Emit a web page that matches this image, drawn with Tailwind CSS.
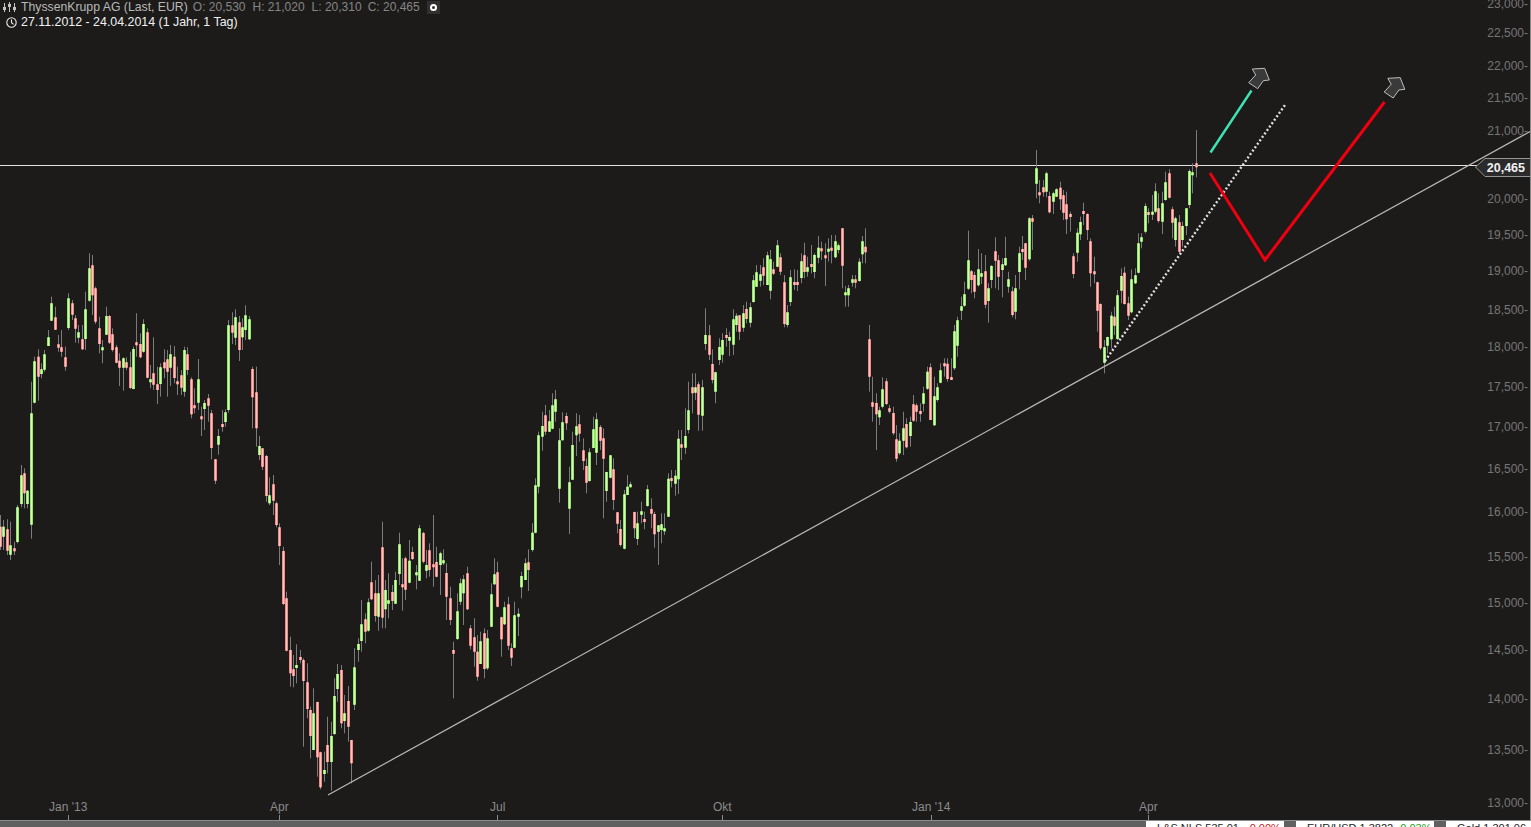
<!doctype html>
<html>
<head>
<meta charset="utf-8">
<script src="https://cdn.jsdelivr.net/npm/@tailwindcss/browser@4"></script>
</head>
<body class="m-0 overflow-hidden bg-[#1c1b1a]">
<div class="flex h-[827px] w-[1531px] flex-col overflow-hidden font-['Liberation_Sans',Arial,sans-serif]">
  <main class="relative flex-1 overflow-hidden bg-[#1c1b1a]">
    <svg id="chart" class="absolute inset-0" width="1531" height="820" viewBox="0 0 1531 820">
      <line x1="0" y1="165.5" x2="1477" y2="165.5" stroke="#e2e2e2" stroke-width="1"/>
      <g id="wicks"></g>
      <path id="bodyG" fill="none" stroke="#94e668" stroke-width="3"/>
      <path id="bodyGi" fill="none" stroke="#d6f8bc" stroke-width="1"/>
      <path id="bodyR" fill="none" stroke="#f08a8a" stroke-width="3"/>
      <path id="bodyRi" fill="none" stroke="#ffc6be" stroke-width="1"/>
      <line x1="328" y1="795" x2="1531" y2="131" stroke="#b9b9b6" stroke-width="1.2"/>
      <line x1="1105" y1="361" x2="1285" y2="105" stroke="#dedede" stroke-width="2.4" stroke-dasharray="2 2.2"/>
      <line x1="1210.5" y1="152.5" x2="1251.5" y2="90.5" stroke="#3fe3b4" stroke-width="2.4"/>
      <polyline points="1210,173 1265,260 1384.5,102" fill="none" stroke="#ee0010" stroke-width="3"/>
      <polygon points="1248.7,82.7 1257.7,88.7 1263.3,80.7 1269.3,80 1264.7,68.3 1252.3,69 1255.7,75" fill="#3a3a3a" stroke="#bdbdbd" stroke-width="1"/>
      <polygon points="1384.2,92 1393.2,98 1398.8,90 1404.8,89.3 1400.2,77.6 1387.8,78.3 1391.2,84.3" fill="#3a3a3a" stroke="#bdbdbd" stroke-width="1"/>
      <polygon points="1475.5,167 1485,158.5 1531,158.5 1531,176.5 1485,176.5" fill="#2b2b2b" stroke="#969696" stroke-width="1"/>
      <line x1="68.5" y1="815" x2="68.5" y2="820" stroke="#8a8a8a"/>
      <line x1="279.5" y1="815" x2="279.5" y2="820" stroke="#8a8a8a"/>
      <line x1="497.5" y1="815" x2="497.5" y2="820" stroke="#8a8a8a"/>
      <line x1="722.5" y1="815" x2="722.5" y2="820" stroke="#8a8a8a"/>
      <line x1="931.5" y1="815" x2="931.5" y2="820" stroke="#8a8a8a"/>
      <line x1="1148.5" y1="815" x2="1148.5" y2="820" stroke="#8a8a8a"/>
    </svg>

    <!-- legend -->
    <div class="absolute left-[3px] top-0 flex flex-col">
      <div class="flex h-[14px] items-center text-[12px] leading-none text-[#868686]">
        <svg class="mr-[5px]" width="13" height="12" viewBox="0 0 13 12" fill="none" stroke="#c4c4c4" stroke-width="1">
          <path d="M1.5 2V11M6.5 1V11M11.5 2V11"/>
          <rect x="0" y="6" width="3" height="3" fill="#c4c4c4" stroke="none"/>
          <rect x="5" y="3" width="3" height="3" fill="#c4c4c4" stroke="none"/>
          <rect x="10" y="6" width="3" height="3" fill="#c4c4c4" stroke="none"/>
        </svg>
        <span class="mr-[5px] text-[12.25px] text-[#b8b8b8]">ThyssenKrupp AG (Last, EUR)</span>
        <span class="mr-[7px]">O: 20,530</span>
        <span class="mr-[7px]">H: 21,020</span>
        <span class="mr-[6px]">L: 20,310</span>
        <span class="mr-[7px]">C: 20,465</span>
        <span class="flex h-[13px] w-[13px] items-center justify-center bg-[#303030]">
          <span class="h-[7px] w-[7px] rounded-full border-2 border-white"></span>
        </span>
      </div>
      <div class="flex h-[16px] items-center text-[12.4px] leading-none text-[#f0f0f0]">
        <svg class="ml-[3px] mr-[4px]" width="11" height="11" viewBox="0 0 11 11" fill="none" stroke="#ececec" stroke-width="1.1">
          <circle cx="5.5" cy="5.5" r="4.7"/>
          <path d="M5.5 2.5V5.7L7.6 7.4"/>
        </svg>
        <span>27.11.2012 - 24.04.2014 (1 Jahr, 1 Tag)</span>
      </div>
    </div>

    <!-- price axis -->
    <div class="absolute right-[3px] top-0 h-full w-[60px] text-right text-[12px] leading-[14px] text-[#767676]">
      <div class="absolute right-0 top-[-3px]">23,000-</div>
      <div class="absolute right-0 top-[26px]">22,500-</div>
      <div class="absolute right-0 top-[59px]">22,000-</div>
      <div class="absolute right-0 top-[91px]">21,500-</div>
      <div class="absolute right-0 top-[124px]">21,000-</div>
      <div class="absolute right-0 top-[192px]">20,000-</div>
      <div class="absolute right-0 top-[228px]">19,500-</div>
      <div class="absolute right-0 top-[264px]">19,000-</div>
      <div class="absolute right-0 top-[303px]">18,500-</div>
      <div class="absolute right-0 top-[340px]">18,000-</div>
      <div class="absolute right-0 top-[380px]">17,500-</div>
      <div class="absolute right-0 top-[420px]">17,000-</div>
      <div class="absolute right-0 top-[462px]">16,500-</div>
      <div class="absolute right-0 top-[505px]">16,000-</div>
      <div class="absolute right-0 top-[550px]">15,500-</div>
      <div class="absolute right-0 top-[596px]">15,000-</div>
      <div class="absolute right-0 top-[643px]">14,500-</div>
      <div class="absolute right-0 top-[692px]">14,000-</div>
      <div class="absolute right-0 top-[743px]">13,500-</div>
      <div class="absolute right-0 top-[796px]">13,000-</div>
    </div>
    <div class="absolute right-[6px] top-[161px] text-[12.5px] font-bold leading-[14px] text-[#f2f2f2]">20,465</div>

    <!-- time axis -->
    <div class="text-[12px] leading-[14px] text-[#8a8a8a]">
      <div class="absolute left-[49px] top-[800px]">Jan '13</div>
      <div class="absolute left-[270px] top-[800px]">Apr</div>
      <div class="absolute left-[490px] top-[800px]">Jul</div>
      <div class="absolute left-[713px] top-[800px]">Okt</div>
      <div class="absolute left-[912px] top-[800px]">Jan '14</div>
      <div class="absolute left-[1139px] top-[800px]">Apr</div>
    </div>
    <div class="absolute right-0 top-0 h-full w-[1px] bg-[#8a8a8a]"></div>
  </main>

  <!-- ticker strip, cut off by the window -->
  <footer class="flex h-[7px] shrink-0 justify-end overflow-hidden border-t border-[#8c8c8c] bg-[#606060] text-[11px] leading-[13px]">
    <div class="mr-[12px] h-[20px] w-[138px] bg-white pl-[11px] pt-[1px] text-[#222]">L&amp;S NLS 535,01 <span class="ml-1 text-[#c02020]">-0,00%</span></div>
    <div class="mr-[12px] h-[20px] w-[138px] bg-white pl-[11px] pt-[1px] text-[#222]">EUR/USD 1,3822 <span class="ml-1 text-[#20a020]">0,03%</span></div>
    <div class="h-[20px] w-[85px] bg-white pl-[11px] pt-[1px] text-[#222]">Gold 1 301,06</div>
  </footer>
</div>
<script>
var S=[
[0,250,"1 795 830 890 900 r|10 810 830 860 900 g|22 808 838 902 915 r|31 815 886 914 930 g|43 875 895 899 915 r|52 765 772 876 880 g|64 645 676 762 772 g|73 655 670 730 775 r|83 720 722 762 775 g|94 395 490 824 866 g|103 320 334 458 460 g|115 298 320 380 452 r|124 340 358 372 385 g|133 300 313 359 365 g|145 240 262 288 288 g|154 140 160 212 212 g|166 170 202 239 240 r|175 255 283 293 305 r|184 240 292 305 320 r|196 290 322 350 362 r|205 130 145 234 240 g|217 150 160 194 210 r|226 195 205 236 278 r|235 225 247 263 280 g|247 225 268 298 300 r|256 125 178 267 300 g|268 10 55 152 155 g|277 15 46 136 195 r|286 110 115 215 222 r|298 200 235 282 310 r|307 270 292 299 340 g|319 170 198 254 255 g|328 195 198 278 282 r|337 235 253 300 305 r|349 285 292 338 340 r|358 310 332 353 408 r|370 322 325 353 422 g|379 322 337 353 360 r|391 305 352 414 417 r|400 290 297 417 418 g|409 190 277 281 320 r|421 250 282 322 325 r|430 208 222 305 308 g|442 235 247 383 385 r|451 345 388 395 415 g|460 262 370 404 420 r|472 350 403 420 462 r|481 340 352 402 440 g|493 298 337 355 385 r|502 300 328 365 440 r|511 285 313 353 408 g|523 288 320 384 400 r|532 350 394 398 435 r|544 360 376 413 435 r|553 290 300 425 440 g|562 292 313 360 375 r|574 382 388 493 505 r|583 415 466 470 490 r|595 327 388 458 480 g|604 470 499 503 558 r|613 450 459 477 540 g|625 432 445 467 515 r|634 480 490 594 628 r|646 628 628 692 702 r|655 537 558 584 614 g|667 480 522 527 545 r|676 478 487 516 530 g|685 210 226 480 488 g|697 187 226 248 282 r|706 178 202 263 285 g|718 198 217 300 333 r|727 205 232 262 300 g|736 166 196 240 270 g|748 198 208 268 270 g"],
[240,360,"38 20 27 112 205 r|49 20 97 205 260 r|58 228 258 285 300 g|67 265 265 320 330 r|79 285 288 408 425 r|88 352 406 430 435 g|100 345 373 422 465 r|109 425 430 495 502 r"],
[260,510,"58 40 52 108 165 r|70 110 123 282 285 r|79 245 265 422 424 r|91 380 420 490 530 r|100 435 478 498 532 r|109 403 465 472 520 g|121 420 441 450 460 r|130 445 450 513 710 r|142 460 517 597 625 r|151 590 600 678 745 r|160 535 610 720 720 g|172 575 576 742 800 r|181 725 727 832 838 r|193 725 780 792 815 g|202 620 705 756 790 r|214 635 678 756 842 g|223 505 558 672 675 g|232 462 492 537 575 g|244 465 480 640 655 r|253 555 610 633 670 g|265 528 573 650 695 r|274 690 690 760 820 r|283 415 472 584 600 g|295 385 402 420 455 g|304 270 343 393 425 g|316 310 328 365 400 r|325 265 277 362 365 g|334 155 217 268 270 r|346 210 250 318 335 r|355 195 250 320 362 g|367 35 112 323 355 r|376 210 240 298 355 g|385 190 271 281 325 g|397 225 246 273 300 r|406 185 210 281 282 g|418 68 103 192 225 g|427 145 223 228 302 r|436 140 145 239 270 r|448 90 152 218 220 g|457 110 126 147 150 r|469 165 187 196 238 g|478 45 55 212 212 g|490 65 69 155 160 r|499 120 165 182 205 g|508 100 121 180 200 r|520 15 163 170 230 r|529 110 156 200 202 r|541 125 130 165 255 g|550 118 151 158 165 g|559 160 189 260 330 r|571 230 265 330 345 r|580 395 420 431 565 r|592 250 304 387 390 g|601 205 220 275 285 g|610 195 208 250 345 g|622 170 190 298 300 r|631 345 355 407 418 r|643 325 382 425 470 r|652 375 425 500 512 r|661 365 394 462 462 g|673 355 370 477 505 r|682 360 385 475 480 g|694 220 253 350 350 g|703 145 193 223 225 g|712 155 187 290 292 r|724 320 322 388 440 r|733 275 292 343 345 g|745 260 283 407 420 r|754 400 415 443 468 r|763 275 316 413 415 g|775 295 311 320 378 g|784 185 198 232 265 g|796 145 160 210 210 g|805 118 157 180 243 r|817 40 68 120 125 g"],
[520,380,"46 295 316 458 460 g|55 155 166 320 340 g|67 95 138 170 212 g|76 75 106 155 165 r|88 90 124 155 155 g|97 40 76 146 148 g|106 30 58 95 125 g|118 145 181 326 368 g|127 97 127 181 181 g|139 98 108 130 150 r|148 260 307 386 462 g|157 155 195 299 300 g|169 100 139 166 228 g|178 105 133 161 185 r|190 175 211 243 270 r|199 235 258 308 340 r|208 205 217 303 305 g|220 110 148 204 205 g|229 98 118 218 255 g|241 135 141 182 210 r|250 145 175 236 415 r|259 275 276 333 365 g|271 225 226 293 295 g|280 235 268 360 390 r|292 396 397 431 460 r|301 420 447 495 500 r|313 330 343 506 508 g|322 285 320 345 345 g|331 305 313 320 322 g|343 395 396 445 475 r|352 395 430 477 495 g|364 365 394 404 430 g|373 395 417 422 448 r|382 315 328 378 380 g|394 355 387 401 445 r|403 395 402 463 503 r|415 435 436 455 555 g|424 400 433 450 490 g|433 400 445 452 465 g|445 280 296 410 410 g|454 270 294 298 322 r|466 270 287 311 347 g|475 150 176 298 342 g|484 150 193 203 240 r|496 85 168 203 222 g|505 5 91 150 160 g|517 -20 22 40 100 r|526 -20 22 38 60 g|535 5 13 104 152 r|547 0 22 107 152 g"],
[680,220,"76 265 345 372 390 g|88 315 346 404 420 r|97 388 432 480 490 r|106 455 457 515 550 g|118 355 381 420 435 g|127 340 360 404 428 g|139 325 345 348 380 r|148 335 351 362 408 g|160 268 298 374 405 g|169 280 287 315 335 g|178 285 286 335 360 r|190 255 280 323 335 g|199 245 267 297 310 r|211 248 262 308 322 g|220 165 181 246 248 g|229 135 157 200 200 g|241 135 163 182 200 g|250 115 142 167 195 r|262 95 106 195 195 g|271 90 118 212 238 g|280 125 148 161 165 r|292 60 76 140 142 g|301 100 112 155 165 r|313 165 187 312 322 r|322 255 277 315 322 g|331 150 172 246 258 g|343 148 186 193 210 r|352 150 186 193 213 r|364 100 124 174 190 g|373 68 106 156 175 r|382 110 142 155 170 g|394 75 132 134 160 r|403 100 105 156 175 g|415 48 83 113 130 g|424 65 85 90 120 r|436 70 106 112 198 r|445 55 86 92 125 g|454 45 83 90 130 r|466 45 64 112 115 g|475 70 76 90 100 g|487 25 25 137 205 r|496 198 217 220 260 g|505 195 205 226 260 g|517 165 178 188 200 g|526 165 178 188 205 r|538 115 125 183 185 g|547 48 64 103 130 g|556 25 80 97 130 r|568 315 358 470 515 r|577 470 547 560 605 r|589 520 549 583 690 r|598 560 571 592 615 g|607 472 508 560 565 g|619 475 484 552 555 r|628 555 565 575 580 r|640 560 579 640 645 r|649 615 658 716 725 r|658 640 662 700 705 g|670 575 625 662 705 g|679 595 612 682 685 r|691 590 606 648 680 g|700 525 553 602 605 r|709 550 556 575 605 r|721 550 573 581 605 r|730 500 520 551 575 g|742 440 455 506 510 g|751 430 442 600 600 r|763 470 529 616 618 g|772 490 502 540 545 g|781 430 451 488 490 g|793 415 430 432 470 r|802 415 431 477 485 r"],
[940,140,"34 655 711 715 720 r|43 555 574 685 690 g|52 530 541 617 650 g|64 470 499 512 540 g|73 425 463 497 500 g|85 272 361 446 450 g|94 390 394 420 460 r|103 395 405 455 475 r|115 327 388 436 440 g|124 340 400 410 432 g|136 345 394 494 505 r|145 430 445 483 548 g|154 375 378 420 445 g|166 292 334 362 445 r|175 345 361 410 450 r|187 355 373 390 472 g|196 290 354 376 378 g|205 395 418 440 458 g|217 440 454 525 532 r|226 405 445 515 538 g|238 320 340 396 448 g|247 288 327 332 360 r|256 310 310 383 420 r|268 232 235 358 362 g|277 225 235 245 330 r|289 30 85 131 175 g|298 120 157 160 190 r|310 120 142 157 170 r|319 95 100 155 172 g|328 155 168 217 220 r|340 155 160 185 222 g|349 145 148 170 170 g|361 125 143 178 210 r|370 150 166 218 240 r|379 155 193 238 282 r|391 215 222 231 275 r|400 340 349 402 415 r|412 265 278 338 365 g|421 230 246 283 300 g|430 188 213 218 255 r|442 220 222 270 300 r|451 295 304 400 440 r|463 350 394 398 430 r|472 425 427 512 575 r|481 490 492 625 630 r|493 600 622 668 700 g|502 590 591 617 640 g|514 515 527 598 625 g|523 500 530 557 585 r|532 450 466 597 600 g|544 385 408 452 490 g|553 380 398 492 494 r|565 470 490 527 540 r|574 388 418 517 520 g|586 385 406 430 432 g|595 280 310 398 400 g|604 280 292 305 325 g|616 190 198 275 280 g|625 205 216 220 250 r|637 165 215 218 240 g|646 130 154 215 220 g|655 160 205 243 248 r|667 155 190 245 282 g|676 95 127 180 182 g|688 88 100 173 175 r|697 200 208 248 295 r|706 230 235 300 320 g|718 225 247 335 340 r|727 245 258 300 320 g|739 205 205 258 285 g|748 88 93 195 205 g|757 70 97 101 160 g|769 -30 70 82 112 r"]
];
var w="",g="",r="";
S.forEach(function(s){s[2].split("|").forEach(function(c){
  var p=c.split(" "),x=Math.floor(s[0]+ +p[0]/3)+.5,
      h=s[1]+p[1]/3,t=s[1]+p[2]/3,b=s[1]+p[3]/3,l=s[1]+p[4]/3;
  if(b-t<3)b=t+3;
  w+="M"+x+" "+Math.min(h,t).toFixed(1)+"V"+Math.max(l,b).toFixed(1);
  var d="M"+x+" "+t.toFixed(1)+"V"+b.toFixed(1);
  if(p[5]=="g")g+=d;else r+=d;
});});
var W=document.createElementNS("http://www.w3.org/2000/svg","path");
W.setAttribute("d",w);W.setAttribute("stroke","#7b7b7b");W.setAttribute("fill","none");W.setAttribute("stroke-width","1");
document.getElementById("wicks").appendChild(W);
["bodyG","bodyGi"].forEach(function(i){document.getElementById(i).setAttribute("d",g)});
["bodyR","bodyRi"].forEach(function(i){document.getElementById(i).setAttribute("d",r)});
</script>
</body>
</html>
